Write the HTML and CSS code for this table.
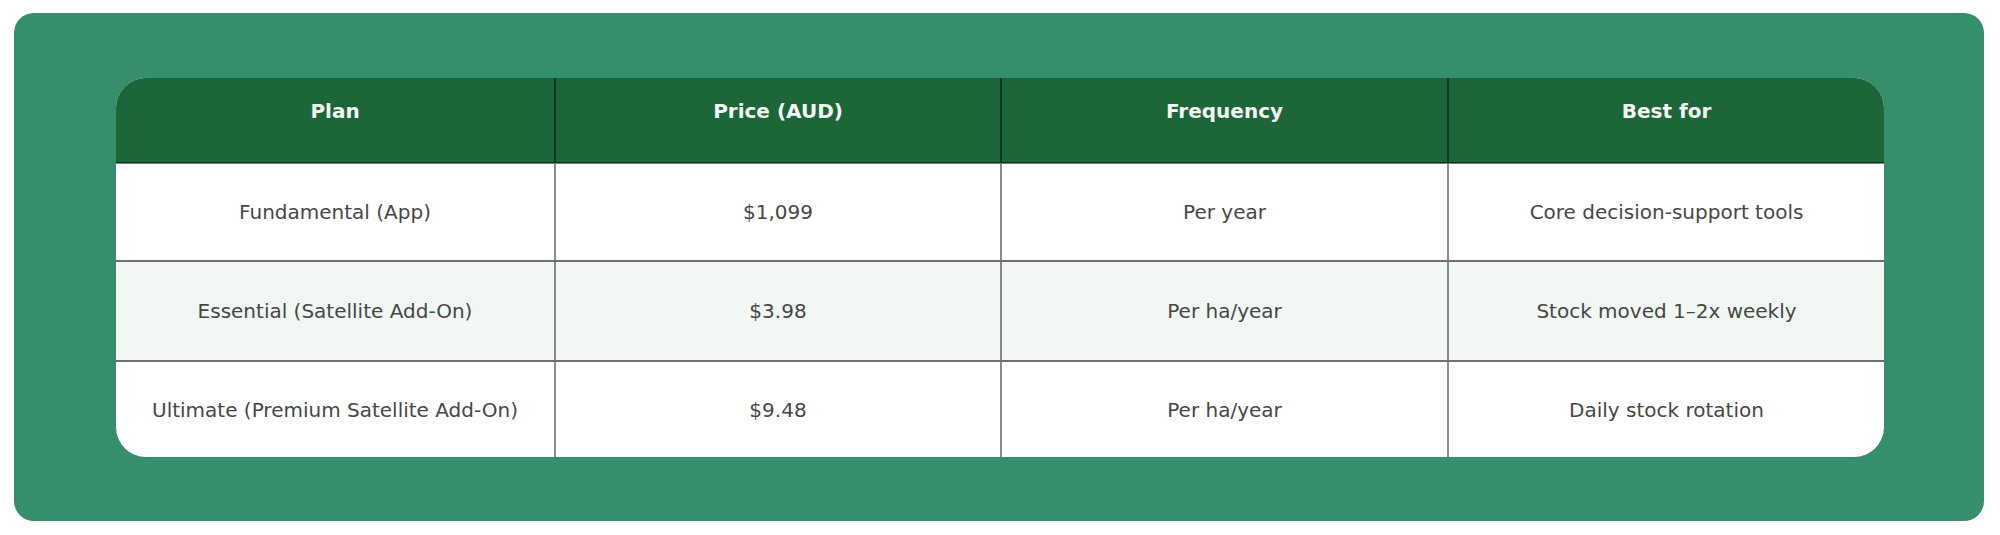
FILE: index.html
```html
<!DOCTYPE html>
<html lang="en">
<head>
<meta charset="utf-8">
<title>Plans</title>
<link rel="stylesheet" href="styles.css">
</head>
<body>
<div class="card">
  <div class="table-wrap">
    <table class="plans">
      <colgroup>
        <col class="c1">
        <col class="c2">
        <col class="c3">
        <col class="c4">
      </colgroup>
      <thead>
        <tr>
          <th>Plan</th>
          <th>Price (AUD)</th>
          <th>Frequency</th>
          <th>Best for</th>
        </tr>
      </thead>
      <tbody>
        <tr class="r1">
          <td>Fundamental (App)</td>
          <td>$1,099</td>
          <td>Per year</td>
          <td>Core decision-support tools</td>
        </tr>
        <tr class="r2 alt">
          <td>Essential (Satellite Add-On)</td>
          <td>$3.98</td>
          <td>Per ha/year</td>
          <td>Stock moved 1–2x weekly</td>
        </tr>
        <tr class="r3">
          <td>Ultimate (Premium Satellite Add-On)</td>
          <td>$9.48</td>
          <td>Per ha/year</td>
          <td>Daily stock rotation</td>
        </tr>
      </tbody>
    </table>
  </div>
</div>
</body>
</html>
```
FILE: styles.css
```css
html, body {
  margin: 0;
  background: #ffffff;
}
body {
  padding: 13px 16px 14px 14px;
  font-family: "DejaVu Sans", Verdana, sans-serif;
}
.card {
  background: #348f6a;
  border-radius: 20px;
  padding: 65px 100px 64px 102px;
}
.table-wrap {
  border-radius: 30px;
  overflow: hidden;
  background: #ffffff;
}
.plans {
  width: 100%;
  border-collapse: collapse;
  table-layout: fixed;
}
.plans .c1 { width: 439px; }
.plans .c2 { width: 446px; }
.plans .c3 { width: 447px; }
.plans .c4 { width: 436px; }
.plans th {
  background: #1d6639;
  color: #f4f7f4;
  font-weight: bold;
  font-size: 20px;
  line-height: 28px;
  height: 85px;
  box-sizing: border-box;
  padding: 19px 16px 0;
  vertical-align: top;
  text-align: center;
  border-left: 2px solid rgba(0, 0, 0, 0.45);
  border-bottom: 2px solid rgba(0, 0, 0, 0.5);
}
.plans td {
  color: #474747;
  font-size: 20px;
  line-height: 28px;
  text-align: center;
  vertical-align: middle;
  padding: 0 16px;
  border-left: 2px solid rgba(0, 0, 0, 0.45);
  border-bottom: 2px solid rgba(0, 0, 0, 0.55);
}
.plans th:first-child,
.plans td:first-child {
  border-left: none;
}
.plans tr:last-child td {
  border-bottom: none;
}
.plans .r1 td { height: 96px; }
.plans .r2 td { height: 98px; }
.plans .r3 td { height: 95px; }
.plans .alt td {
  background: #f1f7f3;
}
```
